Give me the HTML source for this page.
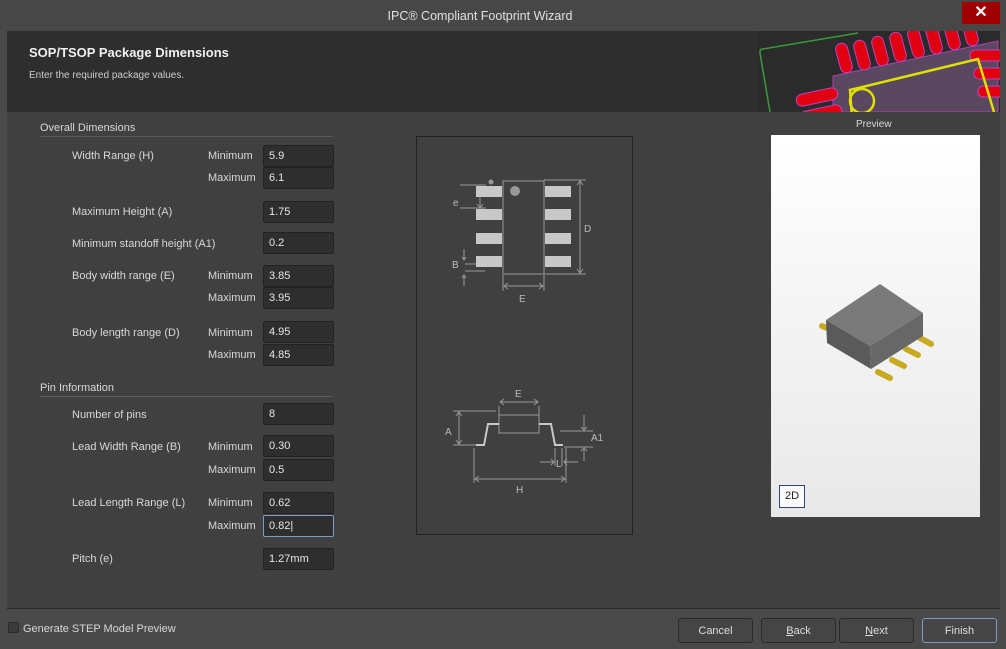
<!DOCTYPE html>
<html><head><style>
*{margin:0;padding:0;box-sizing:border-box}
body{width:1006px;height:649px;background:#4a4a4a;font-family:"Liberation Sans",sans-serif;color:#d8d8d8;font-size:11px;position:relative;overflow:hidden}
.a{position:absolute}
.t{position:absolute;white-space:nowrap}
.f{position:absolute;left:263px;width:71px;height:22px;background:#2e2e2e;border:1px solid #222;border-radius:2px;padding:0 5px;line-height:21px;color:#e6e6e6;font-size:11px}
.btn{position:absolute;top:618px;height:25px;border:1px solid #2a2a2a;border-radius:3px;background:#454545;text-align:center;line-height:25px;font-size:11px;color:#ddd}
</style></head><body>
<div class="a" style="left:0;top:0;width:1006px;height:31px;background:#474747"></div>
<div class="t" style="left:0;width:960px;top:9px;text-align:center;font-size:12.5px;color:#e0e0e0">IPC® Compliant Footprint Wizard</div>
<div class="a" style="left:962px;top:2px;width:38px;height:22px;background:#a10000;color:#fff;text-align:center;font-size:16px;line-height:22px;font-weight:bold">✕</div>
<div class="a" style="left:7px;top:31px;width:993px;height:81px;background:#2e2e2e"></div>
<div class="t" style="left:29px;top:45px;font-size:13px;font-weight:bold;color:#f0f0f0">SOP/TSOP Package Dimensions</div>
<div class="t" style="left:29px;top:70px;font-size:10px;color:#ccc">Enter the required package values.</div>
<svg class="a" style="left:758px;top:31px" width="242" height="81">
<rect width="242" height="81" fill="#2b2b2b"/>
<path d="M2 22 L2 20 Q2 18 5 18 L100 2" stroke="#3a9a3a" stroke-width="1.5" fill="none"/>
<path d="M2 22 L12 81" stroke="#3a9a3a" stroke-width="1.5" fill="none"/>
<path d="M75 45 L240 10 L240 81 L75 81 Z" fill="#5a4760" stroke="#b040b0"/>
<g fill="#e00010" stroke="#c040c0">
<rect x="80" y="12" width="12" height="30" rx="6" transform="rotate(-15 86 27)"/>
<rect x="98" y="9" width="12" height="30" rx="6" transform="rotate(-15 104 24)"/>
<rect x="116" y="5" width="12" height="30" rx="6" transform="rotate(-15 122 20)"/>
<rect x="134" y="1" width="12" height="30" rx="6" transform="rotate(-15 140 16)"/>
<rect x="152" y="-3" width="12" height="30" rx="6" transform="rotate(-15 158 12)"/>
<rect x="170" y="-7" width="12" height="30" rx="6" transform="rotate(-15 176 8)"/>
<rect x="188" y="-11" width="12" height="30" rx="6" transform="rotate(-15 194 4)"/>
<rect x="206" y="-15" width="12" height="30" rx="6" transform="rotate(-15 212 0)"/>
<rect x="38" y="60" width="42" height="12" rx="6" transform="rotate(-12 59 66)"/>
<rect x="42" y="77" width="42" height="12" rx="6" transform="rotate(-12 63 83)"/>
<rect x="212" y="19" width="40" height="11" rx="5"/>
<rect x="216" y="37" width="40" height="11" rx="5"/>
<rect x="220" y="55" width="40" height="11" rx="5"/>
</g>
<path d="M94 87 L92 59 L220 28 L236 81" stroke="#e0e000" stroke-width="2.5" fill="none"/>
<circle cx="104" cy="70" r="12" stroke="#e0e000" stroke-width="2.5" fill="none"/>
</svg>
<div class="a" style="left:7px;top:112px;width:993px;height:497px;background:#404040;border-bottom:1px solid #2a2a2a"></div>
<div class="t" style="left:40px;top:122px">Overall Dimensions</div>
<div class="a" style="left:40px;top:136px;width:293px;height:1px;background:#5a5a5a"></div>
<div class="t" style="left:40px;top:382px">Pin Information</div>
<div class="a" style="left:40px;top:396px;width:293px;height:1px;background:#5a5a5a"></div>

<div class="t" style="left:72px;top:150px">Width Range (H)</div><div class="t" style="left:208px;top:150px">Minimum</div><div class="f" style="top:145px">5.9</div>
<div class="t" style="left:208px;top:172px">Maximum</div><div class="f" style="top:167px">6.1</div>
<div class="t" style="left:72px;top:206px">Maximum Height (A)</div><div class="f" style="top:201px">1.75</div>
<div class="t" style="left:72px;top:238px">Minimum standoff height (A1)</div><div class="f" style="top:232px">0.2</div>
<div class="t" style="left:72px;top:270px">Body width range (E)</div><div class="t" style="left:208px;top:270px">Minimum</div><div class="f" style="top:265px">3.85</div>
<div class="t" style="left:208px;top:292px">Maximum</div><div class="f" style="top:287px">3.95</div>
<div class="t" style="left:72px;top:327px">Body length range (D)</div><div class="t" style="left:208px;top:327px">Minimum</div><div class="f" style="top:321px">4.95</div>
<div class="t" style="left:208px;top:349px">Maximum</div><div class="f" style="top:344px">4.85</div>
<div class="t" style="left:72px;top:409px">Number of pins</div><div class="f" style="top:403px">8</div>
<div class="t" style="left:72px;top:441px">Lead Width Range (B)</div><div class="t" style="left:208px;top:441px">Minimum</div><div class="f" style="top:435px">0.30</div>
<div class="t" style="left:208px;top:464px">Maximum</div><div class="f" style="top:459px">0.5</div>
<div class="t" style="left:72px;top:497px">Lead Length Range (L)</div><div class="t" style="left:208px;top:497px">Minimum</div><div class="f" style="top:492px">0.62</div>
<div class="t" style="left:208px;top:520px">Maximum</div><div class="f" style="top:515px;border-color:#7a9cc0">0.82|</div>
<div class="t" style="left:72px;top:553px">Pitch (e)</div><div class="f" style="top:548px">1.27mm</div>

<svg class="a" style="left:416px;top:136px" width="217" height="400" font-family="Liberation Sans" font-size="10" fill="#bbb">
<rect x="0.5" y="0.5" width="216" height="398" fill="#404040" stroke="#222"/>
<g stroke="#999" fill="none">
<rect x="87" y="45" width="41" height="93"/>
<line x1="44" y1="49" x2="70" y2="49"/><line x1="44" y1="72" x2="70" y2="72"/>
<line x1="64" y1="50" x2="64" y2="72"/><path d="M61 54 L64 50 L67 54 M61 68 L64 72 L67 68"/>
<line x1="49" y1="128" x2="69" y2="128"/><line x1="49" y1="135" x2="69" y2="135"/>
<path d="M48 113 V124 M46 121 L48 124 L50 121 M48 139 V150 M46 142 L48 139 L50 142"/>
<line x1="128" y1="44" x2="170" y2="44"/><line x1="128" y1="138" x2="170" y2="138"/>
<line x1="164" y1="45" x2="164" y2="137"/><path d="M161 49 L164 45 L167 49 M161 133 L164 137 L167 133"/>
<line x1="87" y1="139" x2="87" y2="155"/><line x1="128" y1="139" x2="128" y2="155"/>
<line x1="88" y1="150" x2="127" y2="150"/><path d="M92 147 L88 150 L92 153 M123 147 L127 150 L123 153"/>
</g>
<g fill="#c8c8c8">
<rect x="60" y="50" width="26" height="11"/><rect x="60" y="73" width="26" height="11"/><rect x="60" y="97" width="26" height="11"/><rect x="60" y="120" width="26" height="11"/>
<rect x="129" y="50" width="26" height="11"/><rect x="129" y="73" width="26" height="11"/><rect x="129" y="97" width="26" height="11"/><rect x="129" y="120" width="26" height="11"/>
</g>
<circle cx="75" cy="46" r="2.5" fill="#999"/><circle cx="99" cy="55" r="5" fill="#999"/>
<text x="37" y="70">e</text><text x="36" y="132">B</text><text x="168" y="96">D</text><text x="103" y="166">E</text>
<g stroke="#999" fill="none">
<rect x="83" y="279" width="40" height="18"/>
<path d="M60 309 H68 L72 288 H83 M123 288 H135 L139 309 H147" stroke="#c8c8c8" stroke-width="2"/>
<line x1="83" y1="270" x2="83" y2="279"/><line x1="123" y1="270" x2="123" y2="279"/>
<line x1="84" y1="266" x2="122" y2="266"/><path d="M88 263 L84 266 L88 269 M118 263 L122 266 L118 269"/>
<line x1="37" y1="275" x2="80" y2="275"/><line x1="37" y1="309" x2="60" y2="309"/>
<line x1="43" y1="276" x2="43" y2="308"/><path d="M40 280 L43 276 L46 280 M40 304 L43 308 L46 304"/>
<line x1="144" y1="295" x2="177" y2="295"/><line x1="148" y1="311" x2="177" y2="311"/>
<path d="M168 279 V294 M165 291 L168 294 L171 291 M168 312 V325 M165 315 L168 312 L171 315"/>
<line x1="58" y1="312" x2="58" y2="347"/><line x1="150" y1="312" x2="150" y2="347"/>
<line x1="59" y1="343" x2="149" y2="343"/><path d="M63 340 L59 343 L63 346 M145 340 L149 343 L145 346"/>
<line x1="139" y1="312" x2="139" y2="330"/><line x1="146" y1="312" x2="146" y2="330"/>
<path d="M124 326 H138 M135 323 L138 326 L135 329 M162 326 H148 M151 323 L148 326 L151 329"/>
</g>
<text x="99" y="261">E</text><text x="29" y="299">A</text><text x="175" y="305">A1</text><text x="140" y="331">L</text><text x="100" y="357">H</text>
</svg>

<div class="t" style="left:856px;top:119px;font-size:10px">Preview</div>
<div class="a" style="left:771px;top:135px;width:209px;height:382px;background:linear-gradient(#ffffff,#e8e8e8)"></div>
<svg class="a" style="left:771px;top:270px" width="209" height="120">
<g stroke="#c8aa20" stroke-width="6" stroke-linecap="round">
<line x1="51" y1="56" x2="56" y2="58"/>
<line x1="107" y1="102" x2="119" y2="108"/><line x1="121" y1="90" x2="133" y2="96"/><line x1="135" y1="79" x2="147" y2="85"/><line x1="149" y1="68" x2="160" y2="74"/>
</g>
<polygon points="55,50 109,14 152,43 99,76" fill="#7a7a7a"/>
<polygon points="55,50 99,76 100,99 56,73" fill="#5a5a5a"/>
<polygon points="99,76 152,43 152,66 100,99" fill="#676767"/>
</svg>
<div class="a" style="left:779px;top:485px;width:26px;height:23px;border:1px solid #2a4a80;background:#fafafa;color:#222;font-size:11px;text-align:center;line-height:21px">2D</div>

<div class="a" style="left:8px;top:622px;width:11px;height:11px;border:1px solid #2a2a2a;border-radius:2px;background:#3a3a3a"></div>
<div class="t" style="left:23px;top:623px">Generate STEP Model Preview</div>
<div class="btn" style="left:678px;width:75px">Cancel</div>
<div class="btn" style="left:761px;width:75px"><u>B</u>ack</div>
<div class="btn" style="left:839px;width:75px"><u>N</u>ext</div>
<div class="btn" style="left:922px;width:75px;border-color:#7a9cc0">Finish</div>
</body></html>
